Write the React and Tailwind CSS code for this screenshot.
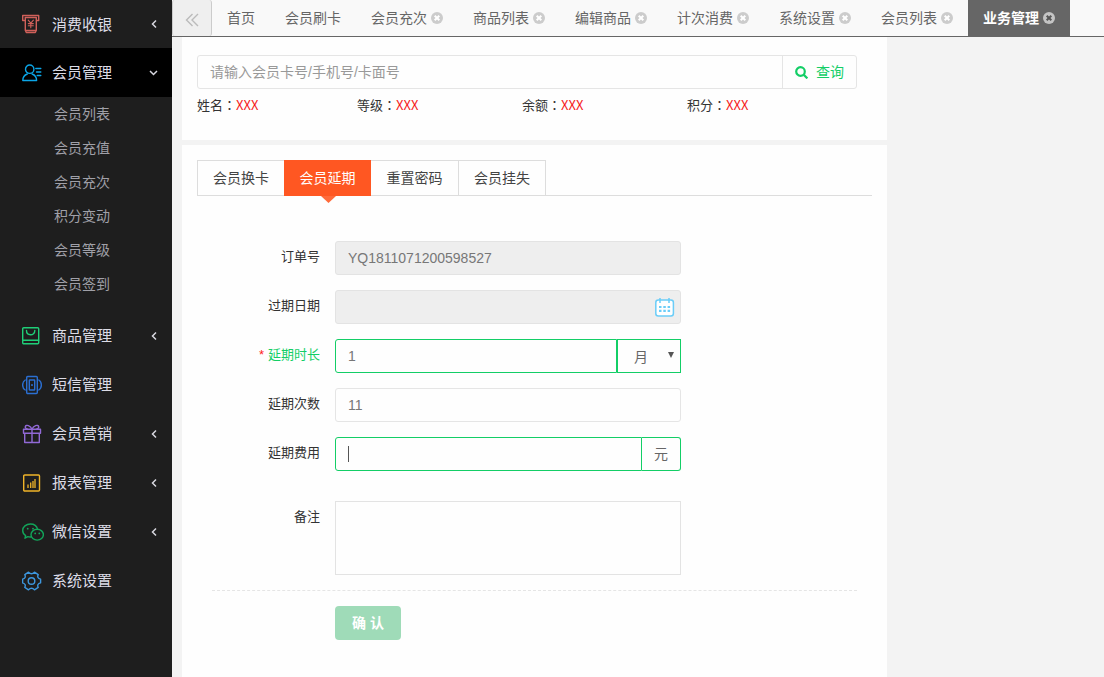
import React from "react";

const FONT = 'font-["Liberation_Sans","Noto_Sans_CJK_SC",sans-serif]';

function Icon({ className, children }) {
  return (
    <svg
      className={`h-5 w-[22px] shrink-0 ${className}`}
      viewBox="0 0 22 20"
      fill="none"
      stroke="currentColor"
      strokeWidth="1.4"
      strokeLinecap="round"
      strokeLinejoin="round"
      aria-hidden="true"
    >
      {children}
    </svg>
  );
}

const CashIcon = () => (
  <Icon className="text-[#d0605a]">
    <path d="M2.500 6.500H.7V1.500h16v5h-1.800" />
    <path d="M3.300 3.500h11v13h-11zM3.300 16.500l1 2h9l1-2" />
    <path d="M6.200 6.200l2.600 3 2.600-3M8.800 9.200v4.600M6.300 9.600h5M6.300 11.700h5" strokeWidth="1.100" />
  </Icon>
);

const MemberIcon = () => (
  <Icon className="text-[#0ba5e6]">
    <circle cx="7.700" cy="6.200" r="4.200" />
    <path d="M5.300 11C2.500 12 .8 14.500.8 17.500h13.800c0-3-1.700-5.500-4.500-6.500" />
    <path d="M13.800 5.500h5M14.500 9h4.300M15.200 12.500h3.600" />
  </Icon>
);

const BagIcon = () => (
  <Icon className="text-[#1fcf78]">
    <rect x="0.700" y="1.700" width="16" height="16" rx="1" />
    <path d="M.7 14.300h16" />
    <path d="M4.500 4.500c0 5.600 8.300 5.600 8.300 0" />
  </Icon>
);

const SmsIcon = () => (
  <Icon className="text-[#2b6fd2]">
    <rect x="4.700" y="1.500" width="10.600" height="17" rx="1" />
    <rect x="7.300" y="5" width="5.400" height="10" rx="0.500" />
    <path d="M10 9.800v.4" strokeWidth="1.800" />
    <path d="M3.200 5C-.2 7-.2 13 3.200 15M16.800 5c3.400 2 3.400 8 0 10" />
  </Icon>
);

const GiftIcon = () => (
  <Icon className="text-[#9169d6]">
    <path d="M1.500 5.200h17v4h-17zM2.700 9.200h14.600v9.300H2.700zM10 5.200v13.300" />
    <path d="M10 5.200C8.500 1.500 4 .3 3.300 2.600 2.900 4 4.500 5 5.500 5.200M10 5.200c1.500-3.700 6-4.900 6.700-2.600.4 1.400-1.200 2.400-2.200 2.600" />
  </Icon>
);

const ReportIcon = () => (
  <Icon className="text-[#f0b429]">
    <rect x="1.700" y="2" width="15.800" height="16" rx="1" />
    <path d="M6 11.500v3.500M8.700 9.500V15M11 8v7M13 6v9" strokeWidth="1.300" strokeLinecap="butt" />
  </Icon>
);

const WechatIcon = () => (
  <Icon className="text-[#12a55a]">
    <path d="M15.600 7.200C14.800 4 11.900 2 8.400 2 4.100 2 .7 4.900.7 8.500c0 2.100 1.100 3.900 2.900 5.100l-.6 2.600 2.800-1.500c1 .3 2 .4 3.100.3" />
    <ellipse cx="15.200" cy="12.700" rx="6.200" ry="5.400" />
    <path d="M5.700 6.600v.1M11 6.600v.1M13.200 11.300v.1M17.300 11.300v.1" strokeWidth="1.800" />
  </Icon>
);

const GearIcon = () => (
  <Icon className="text-[#3d97de]">
    <path d="M18.600 11.800Q14.600 13 16.200 16.400L12.500 18.800Q9.500 15.600 6.500 18.800L2.800 16.400Q4.400 13 .6 11.800V8.200Q4.400 7 2.800 3.600L6.500 1.200Q9.500 4.400 12.500 1.200L16.200 3.600Q14.600 7 18.600 8.200Z" />
    <circle cx="9.500" cy="10" r="3.300" />
  </Icon>
);

function Chevron({ open }) {
  return (
    <svg className="size-3 shrink-0" viewBox="0 0 12 12" fill="none" stroke="#d8d8e0" strokeWidth="1.500" aria-hidden="true">
      <path d={open ? "M2 4l3.500 3.500L9 4" : "M8 2.500L4.500 6 8 9.500"} />
    </svg>
  );
}

const SUB_ITEMS = ["会员列表", "会员充值", "会员充次", "积分变动", "会员等级", "会员签到"];

const LOWER_ITEMS = [
  { label: "商品管理", icon: BagIcon, more: true },
  { label: "短信管理", icon: SmsIcon },
  { label: "会员营销", icon: GiftIcon, more: true },
  { label: "报表管理", icon: ReportIcon, more: true },
  { label: "微信设置", icon: WechatIcon, more: true },
  { label: "系统设置", icon: GearIcon },
];

function MenuItem({ label, icon: Glyph, more, open, className = "h-[49px]" }) {
  return (
    <a href="#" className={`flex items-center gap-2 pr-3 pl-[22px] text-[15px] leading-[23px] text-[#dcdce6] ${className}`}>
      <Glyph />
      <span className="flex-1">{label}</span>
      {more && <Chevron open={open} />}
    </a>
  );
}

function Sidebar() {
  return (
    <nav className="w-[172px] shrink-0 bg-[#1e1e1e]">
      <MenuItem label="消费收银" icon={CashIcon} more className="h-12" />
      <MenuItem label="会员管理" icon={MemberIcon} more open className="h-[49px] bg-black" />
      <ul className="pb-[10px]">
        {SUB_ITEMS.map((label) => (
          <li key={label}>
            <a href="#" className="flex h-[34px] items-center pl-[54px] text-sm text-[#a0a0a8]">
              {label}
            </a>
          </li>
        ))}
      </ul>
      {LOWER_ITEMS.map((item) => (
        <MenuItem key={item.label} {...item} />
      ))}
    </nav>
  );
}

const PAGES = [
  { label: "首页" },
  { label: "会员刷卡" },
  { label: "会员充次", close: true },
  { label: "商品列表", close: true },
  { label: "编辑商品", close: true },
  { label: "计次消费", close: true },
  { label: "系统设置", close: true },
  { label: "会员列表", close: true },
  { label: "业务管理", close: true, active: true },
];

function CloseIcon({ active }) {
  return (
    <svg className="size-3" viewBox="0 0 12 12" aria-hidden="true">
      <circle cx="6" cy="6" r="6" fill={active ? "#c4c4c4" : "#cccccc"} />
      <path d="M3.700 3.700l4.600 4.600M8.300 3.700L3.700 8.300" stroke={active ? "#555555" : "#ffffff"} strokeWidth="2" />
    </svg>
  );
}

function PageTabs() {
  return (
    <header className="flex h-[37px] border-b border-[#666666] bg-[#f9f9f9]">
      <button
        type="button"
        aria-label="向左滚动"
        className="flex w-10 shrink-0 items-center justify-center rounded-[3px] border-x border-[#cccccc] bg-[#efefef] pt-1"
      >
        <svg className="size-4" viewBox="0 0 16 16" fill="none" stroke="#bbbbbb" strokeWidth="1.400" aria-hidden="true">
          <path d="M8.500 2L2.500 8l6 6M14 2L8 8l6 6" />
        </svg>
      </button>
      {PAGES.map(({ label, close, active }) => (
        <div
          key={label}
          className={`flex shrink-0 items-center gap-1 px-[15px] text-sm ${
            active ? "bg-[#666666] font-bold text-white" : "text-[#666666]"
          }`}
        >
          <a href="#">{label}</a>
          {close && (
            <button type="button" aria-label={`关闭${label}`}>
              <CloseIcon active={active} />
            </button>
          )}
        </div>
      ))}
    </header>
  );
}

function SearchPanel() {
  return (
    <section className="h-[103px] bg-[#fefefe] px-[15px] pt-[18px]">
      <form className="mr-[15px] flex h-[34px] rounded-[3px] border border-[#e5e5e5]">
        <input
          type="text"
          aria-label="会员查询"
          placeholder="请输入会员卡号/手机号/卡面号"
          className="min-w-0 flex-1 px-3 text-sm outline-none placeholder:text-[#999999]"
        />
        <button
          type="button"
          className="flex w-[74px] items-center gap-2 border-l border-[#e5e5e5] pl-3 text-sm text-[#13ce66]"
        >
          <svg className="size-[13px]" viewBox="0 0 13 13" fill="none" stroke="currentColor" strokeWidth="2.200" aria-hidden="true">
            <circle cx="5.500" cy="5.500" r="4.300" />
            <path d="M8.600 8.600l3.800 3.800" />
          </svg>
          查询
        </button>
      </form>
      <dl className="grid grid-cols-[160px_165px_165px_1fr] pt-[6px] text-[13px] leading-5">
        {["姓名", "等级", "余额", "积分"].map((label) => (
          <div key={label} className="flex">
            <dt className="text-[#333333]">
              {label}
              <span className='font-["Noto_Sans_CJK_TC",sans-serif]'>：</span>
            </dt>
            <dd className='font-["Noto_Sans_CJK_SC",sans-serif] text-[#f51c1c]'>XXX</dd>
          </div>
        ))}
      </dl>
    </section>
  );
}

function ServiceTabs() {
  return (
    <div role="tablist" className="flex h-9 border-b border-[#dddddd] text-sm text-[#444444]">
      <button type="button" role="tab" className="h-9 w-[87px] border border-r-0 border-[#dddddd]">
        会员换卡
      </button>
      <button type="button" role="tab" aria-selected="true" className="relative h-9 w-[87px] bg-[#ff5722] text-white">
        会员延期
        <svg className="absolute top-full left-[37px] h-[7px] w-[15px]" viewBox="0 0 15 7" aria-hidden="true">
          <path d="M0 0h15L7.500 7z" fill="#ff6a3a" />
        </svg>
      </button>
      <button type="button" role="tab" className="h-9 w-[88px] border border-l-0 border-[#dddddd]">
        重置密码
      </button>
      <button type="button" role="tab" className="h-9 w-[87px] border border-l-0 border-[#dddddd]">
        会员挂失
      </button>
    </div>
  );
}

function Field({ id, label, required, tall, children }) {
  return (
    <div className="flex gap-[15px]">
      <label
        htmlFor={id}
        className={`w-[123px] shrink-0 text-right text-[13px] leading-8 ${required ? "text-[#13ce66]" : "text-[#333333]"}`}
      >
        {required && <span className="mr-1 text-[#ff2020]">*</span>}
        {label}
      </label>
      <div className={`relative flex w-[346px] ${tall ? "h-[74px]" : "h-[34px]"}`}>{children}</div>
    </div>
  );
}

const BOX = "min-w-0 flex-1 border px-3 text-sm text-[#777777] outline-none";

function ExtensionForm() {
  return (
    <form className="flex flex-col gap-[15px] pt-[45px]">
      <Field id="order" label="订单号">
        <input id="order" readOnly defaultValue="YQ1811071200598527" className={`${BOX} rounded-[3px] border-[#e3e3e3] bg-[#eeeeee]`} />
      </Field>
      <Field id="expiry" label="过期日期">
        <input id="expiry" readOnly className={`${BOX} rounded-[3px] border-[#e3e3e3] bg-[#eeeeee]`} />
        <svg className="absolute top-2 right-[6px] size-5" viewBox="0 0 20 20" fill="none" stroke="#6bcdf8" strokeWidth="1.500" aria-hidden="true">
          <rect x="0.800" y="2" width="17.600" height="16" rx="2.500" fill="#ffffff" />
          <path d="M5 0v5M14 0v5" />
          <path d="M4 9h2.500M8.300 9h2.500M12.600 9h2.500M4 12.800h2.500M8.300 12.800h2.500M12.600 12.800h2.500" strokeWidth="2.200" />
        </svg>
      </Field>
      <Field id="duration" label="延期时长" required>
        <input id="duration" defaultValue="1" className={`${BOX} rounded-l-[3px] border-[#13ce66]`} />
        <select
          aria-label="时长单位"
          className="w-16 appearance-none border border-[#13ce66] bg-transparent pt-[2px] pl-4 text-sm text-[#666666] outline-none"
        >
          <option>月</option>
        </select>
        <svg className="pointer-events-none absolute top-[13px] right-[7px] h-[6px] w-[6px]" viewBox="0 0 6 6" aria-hidden="true">
          <path d="M0 0h6L3 6z" fill="#555555" />
        </svg>
      </Field>
      <Field id="times" label="延期次数">
        <input id="times" defaultValue="11" className={`${BOX} rounded-[3px] border-[#e5e5e5]`} />
      </Field>
      <Field id="fee" label="延期费用">
        <input id="fee" className={`${BOX} rounded-l-[3px] border-[#13ce66] caret-transparent`} />
        <span className="absolute top-[9px] left-[13px] h-4 w-px bg-[#555555]" />
        <span className="flex w-[39px] items-center justify-center rounded-r-[3px] border border-l-0 border-[#13ce66] text-sm text-[#666666]">
          元
        </span>
      </Field>
      <div className="pt-[15px]">
        <Field id="remark" label="备注" tall>
          <textarea id="remark" className={`${BOX} resize-none border-[#e3e3e3] py-2`} />
        </Field>
      </div>
      <div className="mx-[15px] border-t border-dashed border-[#e5e5e5] pt-[15px] pl-[123px]">
        <button type="button" className="h-[34px] w-[66px] rounded bg-[#9fdbb8] text-sm font-bold text-white">
          确 认
        </button>
      </div>
    </form>
  );
}

export default function App() {
  return (
    <div className={`flex min-h-screen bg-[#f3f3f3] ${FONT}`}>
      <Sidebar />
      <div className="flex min-w-0 flex-1 flex-col">
        <PageTabs />
        <main className="ml-[10px] flex w-[705px] max-w-full flex-1 flex-col gap-[5px]">
          <SearchPanel />
          <section className="flex-1 bg-[#fefefe] px-[15px] pt-[15px]">
            <ServiceTabs />
            <ExtensionForm />
          </section>
        </main>
      </div>
    </div>
  );
}
